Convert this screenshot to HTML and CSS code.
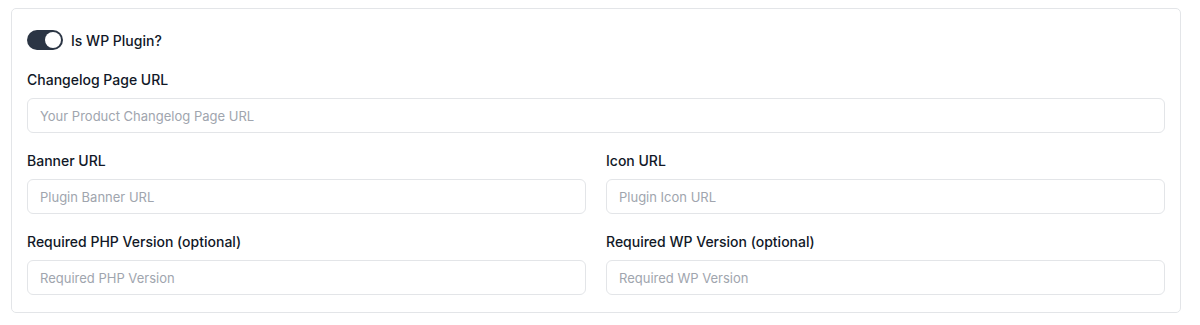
FILE: index.html
```html
<!DOCTYPE html>
<html lang="en">
<head>
    <meta charset="UTF-8">
    <meta name="viewport" content="width=device-width, initial-scale=1.0">
    <title>Plugin Settings</title>
    <link rel="stylesheet" href="styles.css">
</head>
<body>
    <div class="card">
        <label class="switch-row">
            <span class="switch"><span class="knob"></span></span>
            <span class="switch-label">Is WP Plugin?</span>
        </label>

        <div class="field">
            <div class="label">Changelog Page URL</div>
            <input class="input" type="text" placeholder="Your Product Changelog Page URL">
        </div>

        <div class="grid">
            <div class="field">
                <div class="label">Banner URL</div>
                <input class="input" type="text" placeholder="Plugin Banner URL">
            </div>
            <div class="field">
                <div class="label">Icon URL</div>
                <input class="input" type="text" placeholder="Plugin Icon URL">
            </div>
            <div class="field">
                <div class="label">Required PHP Version (optional)</div>
                <input class="input" type="text" placeholder="Required PHP Version">
            </div>
            <div class="field">
                <div class="label">Required WP Version (optional)</div>
                <input class="input" type="text" placeholder="Required WP Version">
            </div>
        </div>
    </div>
</body>
</html>
```
FILE: styles.css
```css
body {
    margin: 0;
    padding: 8px 19px 0 11px;
    background: #fff;
    font-family: Inter, "Noto Sans", sans-serif;
    color: #111827;
}
.card {
    border: 1px solid #e3e5e8;
    border-radius: 5px;
    padding: 21px 15px 17px 15px;
    background: #fff;
}
.switch-row {
    display: flex;
    align-items: center;
    height: 20px;
    gap: 8px;
    margin-bottom: 20px;
}
.switch {
    width: 36px;
    height: 20px;
    border-radius: 10px;
    background: #2b3544;
    display: flex;
    align-items: center;
    justify-content: flex-end;
    padding: 0 2px;
    box-sizing: border-box;
}
.knob {
    width: 16px;
    height: 16px;
    border-radius: 50%;
    background: #fff;
}
.switch-label {
    font-size: 14px;
    font-weight: 500;
    color: #111827;
}
.field {
    display: flex;
    flex-direction: column;
}
.label {
    font-size: 14px;
    font-weight: 500;
    line-height: 20px;
    margin-bottom: 8px;
}
.input {
    height: 35px;
    box-sizing: border-box;
    border: 1px solid #e3e5e8;
    border-radius: 6px;
    padding: 0 12px;
    font-family: inherit;
    font-size: 13px;
    color: #111827;
    outline: none;
    margin-bottom: 18px;
}
.input::placeholder {
    color: #a0a5ae;
}
.grid {
    display: grid;
    grid-template-columns: 1fr 1fr;
    column-gap: 20px;
}
.grid .field:nth-last-child(-n+2) .input {
    margin-bottom: 0;
}
```
